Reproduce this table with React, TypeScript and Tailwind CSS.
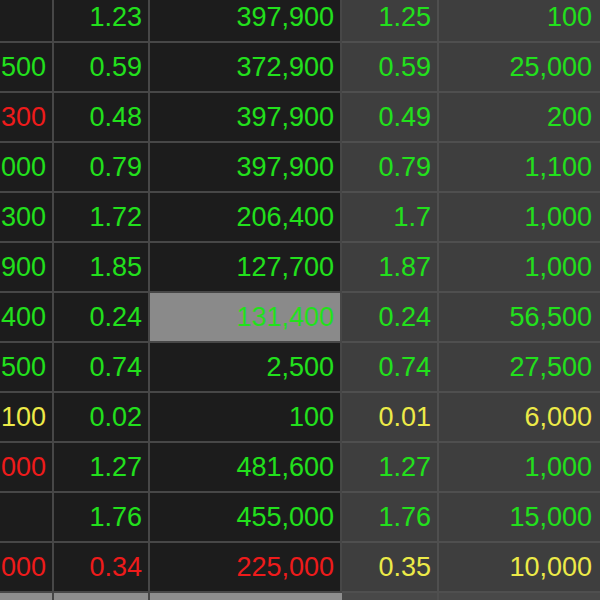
type Tone = 'g' | 'r' | 'y' | ''

type Row = {
  vol: string
  volTone: Tone
  last: string
  lastTone: Tone
  total: string
  totalTone: Tone
  bid: string
  bidTone: Tone
  bidVol: string
  bidVolTone: Tone
  hl?: boolean
}

const ROWS: Row[] = [
  { vol: '', volTone: '', last: '1.23', lastTone: 'g', total: '397,900', totalTone: 'g', bid: '1.25', bidTone: 'g', bidVol: '100', bidVolTone: 'g' },
  { vol: '500', volTone: 'g', last: '0.59', lastTone: 'g', total: '372,900', totalTone: 'g', bid: '0.59', bidTone: 'g', bidVol: '25,000', bidVolTone: 'g' },
  { vol: '300', volTone: 'r', last: '0.48', lastTone: 'g', total: '397,900', totalTone: 'g', bid: '0.49', bidTone: 'g', bidVol: '200', bidVolTone: 'g' },
  { vol: '000', volTone: 'g', last: '0.79', lastTone: 'g', total: '397,900', totalTone: 'g', bid: '0.79', bidTone: 'g', bidVol: '1,100', bidVolTone: 'g' },
  { vol: '300', volTone: 'g', last: '1.72', lastTone: 'g', total: '206,400', totalTone: 'g', bid: '1.7', bidTone: 'g', bidVol: '1,000', bidVolTone: 'g' },
  { vol: '900', volTone: 'g', last: '1.85', lastTone: 'g', total: '127,700', totalTone: 'g', bid: '1.87', bidTone: 'g', bidVol: '1,000', bidVolTone: 'g' },
  { vol: '400', volTone: 'g', last: '0.24', lastTone: 'g', total: '131,400', totalTone: 'g', bid: '0.24', bidTone: 'g', bidVol: '56,500', bidVolTone: 'g', hl: true },
  { vol: '500', volTone: 'g', last: '0.74', lastTone: 'g', total: '2,500', totalTone: 'g', bid: '0.74', bidTone: 'g', bidVol: '27,500', bidVolTone: 'g' },
  { vol: '100', volTone: 'y', last: '0.02', lastTone: 'g', total: '100', totalTone: 'g', bid: '0.01', bidTone: 'y', bidVol: '6,000', bidVolTone: 'y' },
  { vol: '000', volTone: 'r', last: '1.27', lastTone: 'g', total: '481,600', totalTone: 'g', bid: '1.27', bidTone: 'g', bidVol: '1,000', bidVolTone: 'g' },
  { vol: '', volTone: '', last: '1.76', lastTone: 'g', total: '455,000', totalTone: 'g', bid: '1.76', bidTone: 'g', bidVol: '15,000', bidVolTone: 'g' },
  { vol: '000', volTone: 'r', last: '0.34', lastTone: 'r', total: '225,000', totalTone: 'r', bid: '0.35', bidTone: 'y', bidVol: '10,000', bidVolTone: 'y' },
]

function toneClass(t: Tone) {
  if (t === 'g') return 'text-[#22e01c]'
  if (t === 'r') return 'text-[#ee1b1b]'
  if (t === 'y') return 'text-[#ecea48]'
  return ''
}

function DarkCell({ w, text, tone, hl }: { w: string; text: string; tone: Tone; hl?: boolean }) {
  return (
    <div
      className={`${w} h-[50px] shrink-0 flex items-center justify-end overflow-hidden pr-[6px] border-r-2 border-b-2 border-[#474747] ${
        hl ? 'bg-[#8a8a8a]' : 'bg-[#1c1c1c]'
      } ${toneClass(tone)}`}
    >
      <span className="whitespace-nowrap">{text}</span>
    </div>
  )
}

function GrayCell({ w, text, tone, edge }: { w: string; text: string; tone: Tone; edge?: boolean }) {
  return (
    <div
      className={`${w} h-[50px] shrink-0 flex items-center justify-end overflow-hidden pr-[6px] border-b-2 border-[#4f4f4f] bg-[#3e3e3e] ${
        edge ? 'pr-[8px]' : 'border-r-2'
      } ${toneClass(tone)}`}
    >
      <span className="whitespace-nowrap">{text}</span>
    </div>
  )
}

export default function App() {
  return (
    <div
      className="w-[600px] h-[600px] overflow-hidden bg-[#1c1c1c] text-[27px] leading-none"
      style={{ fontFamily: '"Liberation Sans", Arial, sans-serif' }}
    >
      <div className="-mt-[7px] flex flex-col">
        {ROWS.map((r, i) => (
          <div key={i} className="flex">
            <DarkCell w="w-[54px]" text={r.vol} tone={r.volTone} />
            <DarkCell w="w-[96px]" text={r.last} tone={r.lastTone} />
            <DarkCell w="w-[192px]" text={r.total} tone={r.totalTone} hl={r.hl} />
            <GrayCell w="w-[97px]" text={r.bid} tone={r.bidTone} />
            <GrayCell w="w-[161px]" text={r.bidVol} tone={r.bidVolTone} edge />
          </div>
        ))}
        {/* selected row, cut off at the bottom */}
        <div className="flex h-[50px]">
          <div className="w-[54px] shrink-0 bg-[#8e8e8e] border-r-2 border-[#474747]" />
          <div className="w-[96px] shrink-0 bg-[#8e8e8e] border-r-2 border-[#474747]" />
          <div className="w-[192px] shrink-0 bg-[#8e8e8e]" />
          <div className="w-[97px] shrink-0 bg-[#484848] border-r-2 border-[#4f4f4f]" />
          <div className="w-[161px] shrink-0 bg-[#484848]" />
        </div>
      </div>
    </div>
  )
}
